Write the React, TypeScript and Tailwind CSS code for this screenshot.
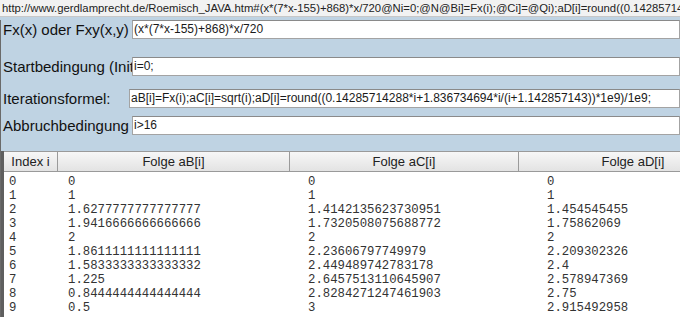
import type { ReactNode } from "react";

const rows: [string, string, string, string][] = [
  ["0", "0", "0", "0"],
  ["1", "1", "1", "1"],
  ["2", "1.6277777777777777", "1.4142135623730951", "1.454545455"],
  ["3", "1.9416666666666666", "1.7320508075688772", "1.75862069"],
  ["4", "2", "2", "2"],
  ["5", "1.8611111111111111", "2.23606797749979", "2.209302326"],
  ["6", "1.5833333333333332", "2.449489742783178", "2.4"],
  ["7", "1.225", "2.6457513110645907", "2.578947369"],
  ["8", "0.8444444444444444", "2.8284271247461903", "2.75"],
  ["9", "0.5", "3", "2.915492958"],
];

function Row({
  label,
  value,
  labelWidth = "w-[131px]",
  className,
}: {
  label: string;
  value: string;
  labelWidth?: string;
  className?: string;
}) {
  return (
    <div className={`flex h-[19px] items-center ${className ?? ""}`}>
      <div className={`${labelWidth} shrink-0 overflow-hidden whitespace-nowrap pl-[2px] text-[15px] leading-[19px] text-[#111]`}>
        {label}
      </div>
      <div className="h-[19px] flex-1 overflow-hidden whitespace-nowrap border border-[#a3a3a3] border-t-[#8a8a8a] bg-white pl-[1px] text-[12px] leading-[17px] text-[#1a1a1a]">
        {value}
      </div>
    </div>
  );
}

function HeaderCell({ children, className }: { children: ReactNode; className?: string }) {
  return (
    <div
      className={`flex h-full items-center justify-center border-r border-b border-[#9a9a9a] bg-gradient-to-b from-[#f7f7f7] to-[#e3e3e3] text-[13px] text-[#222] ${className ?? ""}`}
    >
      {children}
    </div>
  );
}

export default function App() {
  return (
    <div className="relative h-[317px] w-[680px] overflow-hidden bg-[#bfd3e3] font-['Liberation_Sans',Arial,sans-serif]">
      <div className="h-[17px] overflow-hidden whitespace-nowrap border-b border-[#c8c8c8] bg-[#f2f2f2] pl-[2px] text-[11.3px] leading-[16px] text-[#222]">
        http://www.gerdlamprecht.de/Roemisch_JAVA.htm#(x*(7*x-155)+868)*x/720@Ni=0;@N@Bi]=Fx(i);@Ci]=@Qi);aD[i]=round((0.14285714288*i+1.836734694*i/(i+1.142857143))*1e9)/1e9;
      </div>
      <div className="border-l border-[#6a6a6a]">
        <Row className="mt-[3px]" label="Fx(x) oder Fxy(x,y)" value="(x*(7*x-155)+868)*x/720" />
        <Row className="mt-[18px]" label="Startbedingung (Initialisierung)" value="i=0;" />
        <Row
          className="mt-[13px]"
          labelWidth="w-[128px]"
          label="Iterationsformel:"
          value="aB[i]=Fx(i);aC[i]=sqrt(i);aD[i]=round((0.14285714288*i+1.836734694*i/(i+1.142857143))*1e9)/1e9;"
        />
        <Row className="mt-[8px]" label="Abbruchbedingung" value="i>16" />
        <div className="mt-[16px] h-[200px] border-l-[3px] border-[#5f5f5f] bg-white">
          <div className="flex h-[21px] border-t border-[#9a9a9a] bg-[#bfd3e3]">
            <HeaderCell className="w-[54px] shrink-0">Index i</HeaderCell>
            <HeaderCell className="w-[232px] shrink-0">Folge aB[i]</HeaderCell>
            <HeaderCell className="w-[229px] shrink-0">Folge aC[i]</HeaderCell>
            <HeaderCell className="w-[229px] shrink-0">Folge aD[i]</HeaderCell>
          </div>
          <div className="pt-[3px] pl-[5px] font-['Liberation_Mono','Courier_New',monospace] text-[12.3px] leading-[14px] text-[#333]">
            {rows.map((r) => (
              <div key={r[0]} className="grid h-[14px] grid-cols-[59px_240px_239px_1fr] whitespace-nowrap">
                <span>{r[0]}</span>
                <span>{r[1]}</span>
                <span>{r[2]}</span>
                <span>{r[3]}</span>
              </div>
            ))}
          </div>
        </div>
      </div>
    </div>
  );
}
